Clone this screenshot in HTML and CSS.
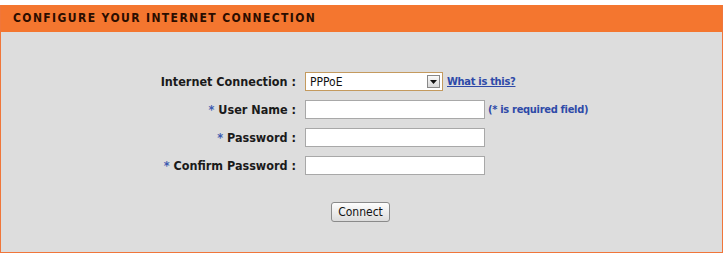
FILE: index.html
```html
<!DOCTYPE html>
<html>
<head>
<meta charset="utf-8">
<link rel="stylesheet" href="styles.css">
</head>
<body>
<div class="box">
  <div class="head">CONFIGURE YOUR INTERNET CONNECTION</div>
  <div class="body">
    <div class="form">
      <div class="lbl">Internet Connection :</div>
      <div class="fld">
        <div class="select"><span>PPPoE</span><span class="arrow"><svg width="7" height="4" viewBox="0 0 7 4"><path d="M0 0h7L3.5 4z" fill="#111"/></svg></span></div>
        <a class="link" href="#">What is this?</a>
      </div>
      <div class="lbl"><span class="star">*</span> User Name :</div>
      <div class="fld"><div class="input"></div><span class="note">(* is required field)</span></div>
      <div class="lbl"><span class="star">*</span> Password :</div>
      <div class="fld"><div class="input"></div></div>
      <div class="lbl"><span class="star">*</span> Confirm Password :</div>
      <div class="fld"><div class="input"></div></div>
    </div>
    <div class="actions"><button class="btn">Connect</button></div>
  </div>
</div>
</body>
</html>
```
FILE: styles.css
```css
html, body { margin: 0; padding: 0; background: #fff; }
body { padding-top: 5px; font-family: "DejaVu Sans Condensed", "DejaVu Sans", sans-serif; }
.box {
  width: 721px;
  height: 247px;
  border: 1px solid #f0763a;
  border-top: 0;
  background: #dddddd;
  display: flex;
  flex-direction: column;
}
.head {
  height: 27px;
  background: #f4762f;
  color: #2a0d00;
  font-weight: bold;
  font-size: 12px;
  letter-spacing: 1.4px;
  line-height: 27px;
  padding-left: 12px;
}
.body { padding-top: 40px; }
.form {
  display: grid;
  grid-template-columns: 295px auto;
  row-gap: 9px;
  align-items: center;
}
.lbl {
  text-align: right;
  font-weight: bold;
  font-size: 12.5px;
  color: #1a1a1a;
  height: 19px;
  line-height: 19px;
}
.star { color: #3c5ab0; }
.fld { display: flex; align-items: center; padding-left: 9px; }
.select {
  width: 136px;
  height: 17px;
  border: 1px solid #c49a5e;
  background: #fff;
  display: flex;
  align-items: center;
  justify-content: space-between;
  font-size: 12px;
  color: #111;
}
.select span:first-child { padding-left: 4px; }
.arrow {
  width: 13px; height: 13px; margin-right: 2px;
  border: 1px solid #888;
  background: linear-gradient(#fafafa, #d8d8d8);
  display: flex; align-items: center; justify-content: center;
  box-sizing: border-box;
}
.link { margin-left: 4px; color: #2e4aa8; font-weight: bold; font-size: 11px; letter-spacing: -0.3px; }
.input {
  width: 178px;
  height: 17px;
  background: #fff;
  border: 1px solid #a8a8a8;
}
.note { margin-left: 3px; color: #2e4aa8; font-weight: bold; font-size: 11px; letter-spacing: -0.3px; }
.actions { display: flex; justify-content: center; padding-top: 27px; padding-right: 2px; }
.btn {
  font-family: inherit;
  font-size: 12px;
  color: #111;
  height: 20px;
  padding: 0 6px;
  border: 1px solid #8a8a8a;
  border-radius: 3px;
  background: linear-gradient(#fdfdfd, #dcdcdc);
}
```
